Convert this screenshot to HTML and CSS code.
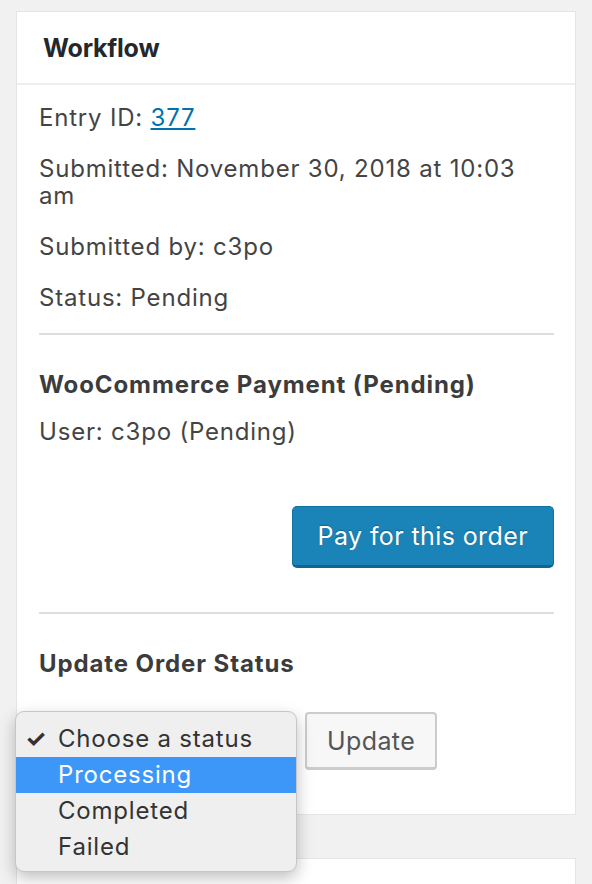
FILE: index.html
```html
<!DOCTYPE html>
<html>
<head>
    <title>Workflow</title>
    <link rel="stylesheet" href="styles.css">
    <meta charset="UTF-8">
</head>
<body>
    <div class="postbox">
        <h2 class="hndle">Workflow</h2>
        <div class="inside">
            <p>Entry ID: <a href="#">377</a></p>
            <p>Submitted: November 30, 2018 at 10:03 am</p>
            <p>Submitted by: c3po</p>
            <p>Status: Pending</p>
            <hr>
            <h4>WooCommerce Payment (Pending)</h4>
            <p>User: c3po (Pending)</p>
            <div class="pay-row">
                <button class="button-primary">Pay for this order</button>
            </div>
            <hr>
            <h4>Update Order Status</h4>
            <div class="status-row">
                <div class="status-select"></div>
                <button class="button">Update</button>
                <ul class="status-menu">
                    <li class="checked">Choose a status</li>
                    <li class="hover">Processing</li>
                    <li>Completed</li>
                    <li>Failed</li>
                </ul>
            </div>
        </div>
    </div>

    <div class="postbox">
        <h2 class="hndle">Admin</h2>
    </div>
</body>
</html>
```

FILE: styles.css
```css
body {
    font-family: "Inter", "Roboto", sans-serif;
    background-color: #f1f1f1;
    color: #444;
    margin: 0;
    padding: 11px 16px 0 16px;
    font-size: 24px;
    letter-spacing: 0.8px;
}

.postbox {
    background-color: #fff;
    border: 1px solid #e5e5e5;
    margin-bottom: 43px;
}

.hndle {
    margin: 0;
    padding: 21px 26px 19px 26px;
    font-size: 25px;
    line-height: 31px;
    font-weight: 700;
    letter-spacing: -0.2px;
    color: #23282d;
    border-bottom: 2px solid #eee;
}

.inside {
    padding: 19px 21px 44px 22px;
}

.inside p {
    margin: 0 0 24px 0;
    line-height: 27px;
}

.inside a {
    color: #0073aa;
}

hr {
    border: none;
    border-top: 2px solid #ddd;
    margin: -2px 0 0 0;
}

h4 {
    font-size: 24px;
    font-weight: 700;
    letter-spacing: 0.9px;
    margin: 35px 0 19px 0;
    color: #3c3c3c;
}

.pay-row {
    display: flex;
    justify-content: flex-end;
    padding: 37px 0 46px 0;
}

.button-primary {
    background-color: #1a84b8;
    border: 1px solid #11719f;
    border-bottom: 3px solid #0f6690;
    border-radius: 5px;
    color: #fff;
    font-family: inherit;
    font-size: 25px;
    letter-spacing: 0.4px;
    padding: 14px 25px 14px 25px;
    text-shadow: 0 -1px 1px #0f6690;
}

.status-row {
    position: relative;
    display: flex;
    gap: 9px;
    margin-top: 34px;
}

.status-select {
    width: 257px;
    height: 55px;
}

.button {
    background-color: #f7f7f7;
    border: 2px solid #ccc;
    border-bottom-width: 3px;
    border-radius: 4px;
    color: #555;
    font-family: inherit;
    font-size: 25px;
    letter-spacing: 0.4px;
    padding: 0 20px;
    height: 58px;
}

.status-menu {
    position: absolute;
    left: -24px;
    top: -1px;
    width: 280px;
    margin: 0;
    padding: 9px 0 6px 0;
    list-style: none;
    background-color: #efefef;
    border: 1px solid #c6c6c6;
    border-radius: 9px;
    box-shadow: 0 6px 16px rgba(0, 0, 0, 0.25);
    color: #333;
}

.status-menu li {
    padding: 0 0 0 42px;
    line-height: 36px;
    position: relative;
}

.status-menu li.checked::before {
    content: "✓";
    position: absolute;
    left: 9px;
    font-weight: 700;
}

.status-menu li.hover {
    background-color: #3d97f8;
    color: #fff;
}
```
